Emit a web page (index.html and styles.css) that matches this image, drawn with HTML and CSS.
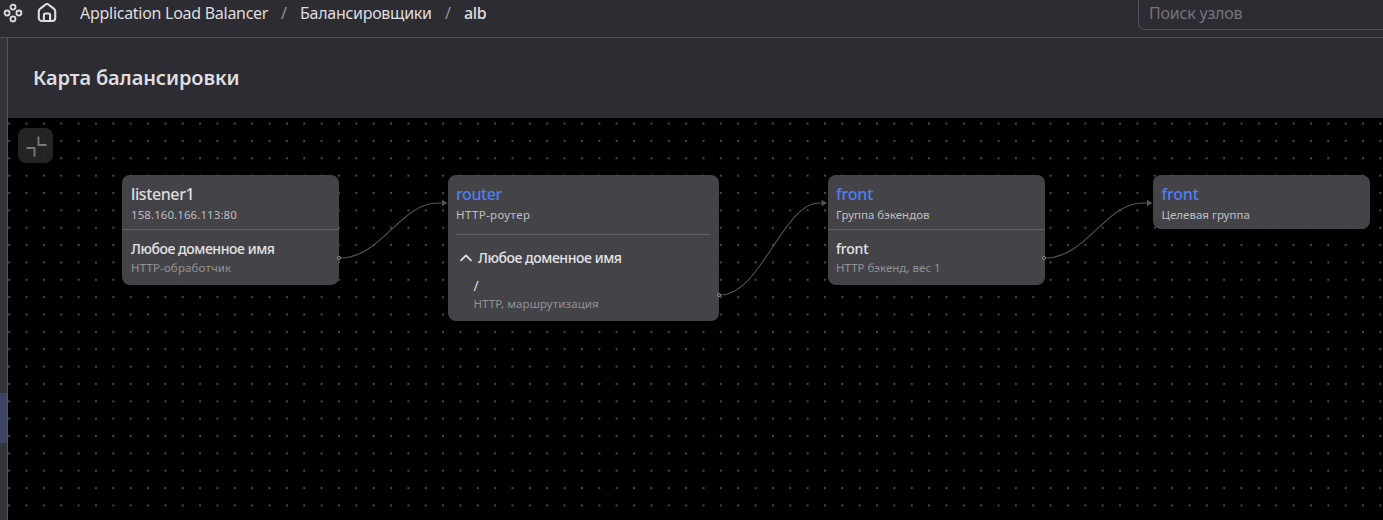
FILE: index.html
```html
<!DOCTYPE html>
<html lang="ru">
<head>
<meta charset="utf-8">
<title>Карта балансировки</title>
<link rel="stylesheet" href="styles.css">
</head>
<body>
<header class="topbar">
  <svg class="icon-services" width="20" height="20" viewBox="0 0 20 20"><g fill="none" stroke="#dedddf" stroke-width="1.8"><circle cx="10" cy="4.1" r="2.5"/><circle cx="4.1" cy="10" r="2.5"/><circle cx="15.9" cy="10" r="2.5"/><circle cx="10" cy="15.9" r="2.5"/></g></svg>
  <svg class="icon-home" width="20" height="20" viewBox="0 0 20 20"><g fill="none" stroke="#dedddf" stroke-width="2.1" stroke-linejoin="round"><path d="M1.8 8.3a3 3 0 0 1 1.2-2.5L8.6 1.5a2.4 2.4 0 0 1 2.8 0L17 5.8a3 3 0 0 1 1.2 2.5V15a3 3 0 0 1-3 3H4.8a3 3 0 0 1-3-3z"/><path d="M6.9 18v-6a1.5 1.5 0 0 1 1.5-1.5h3.2a1.5 1.5 0 0 1 1.5 1.5v6"/></g></svg>
  <nav class="crumbs">
    <span class="crumb crumb-service">Application Load Balancer</span><span class="sep">/</span><span class="crumb crumb-list">Балансировщики</span><span class="sep">/</span><span class="crumb crumb-current">alb</span>
  </nav>
  <div class="search">Поиск узлов</div>
</header>
<div class="layout">
  <aside class="rail"><div class="rail-active"></div></aside>
  <main class="main">
    <div class="heading"><h1>Карта балансировки</h1></div>
    <section class="canvas">
      <svg class="wires" width="1375" height="402" viewBox="8 118 1375 402">
        <defs><pattern id="dots" x="0.5" y="114.9" width="17.357" height="17.357" patternUnits="userSpaceOnUse"><circle cx="8.68" cy="8.68" r="1.15" fill="#47474a"/></pattern></defs>
        <rect x="8" y="118" width="1375" height="402" fill="url(#dots)"/>
      </svg>
      <button class="fit"><svg width="22" height="22" viewBox="0 0 22 22"><path d="M13.5 1.5v8.5h8M1.5 13h8v8.5" fill="none" stroke="#78787a" stroke-width="1.9"/></svg></button>
      <article class="node node-listener">
        <div class="head"><div class="title">listener1</div><div class="sub sub-ip">158.160.166.113:80</div></div>
        <div class="row"><div class="name name-host">Любое доменное имя</div><div class="note note-handler">HTTP-обработчик</div></div>
      </article>
      <article class="node node-router">
        <div class="head head-inset"><div class="title link">router</div><div class="sub sub-router">HTTP-роутер</div></div>
        <div class="group">
          <div class="group-head"><svg width="12" height="8" viewBox="0 0 12 8"><path d="M1 6.4 6 1.3l5 5.1" fill="none" stroke="#e3e3e4" stroke-width="1.7" stroke-linecap="round" stroke-linejoin="round"/></svg><span class="name name-host">Любое доменное имя</span></div>
          <div class="route"><div class="path">/</div><div class="note note-route">HTTP, маршрутизация</div></div>
        </div>
      </article>
      <article class="node node-backend">
        <div class="head"><div class="title link title-front">front</div><div class="sub sub-backend">Группа бэкендов</div></div>
        <div class="row"><div class="name name-front">front</div><div class="note note-backend">HTTP бэкенд, вес 1</div></div>
      </article>
      <article class="node node-target">
        <div class="head head-last"><div class="title link title-front">front</div><div class="sub sub-target">Целевая группа</div></div>
      </article>
      <svg class="wires" width="1375" height="402" viewBox="8 118 1375 402">
        <g fill="none" stroke="#535355" stroke-width="1.1">
          <path d="M340 258C382 258 400 203 438 203h5"/>
          <path d="M720 295C761 295 783 203 819 203h4"/>
          <path d="M1045 258C1087 258 1105 203 1143 203h5"/>
        </g>
        <g fill="#535355"><path d="M442 199.7 447.5 203 442 206.3zM821.5 199.7 827 203 821.5 206.3zM1147 199.7 1152.5 203 1147 206.3z"/></g>
        <g fill="#302f33" stroke="#858588" stroke-width="1"><circle cx="339" cy="258" r="1.6"/><circle cx="719" cy="295" r="1.6"/><circle cx="1044" cy="258" r="1.6"/></g>
      </svg>
    </section>
  </main>
</div>
</body>
</html>
```
FILE: styles.css
```css
* { box-sizing: border-box; }
body { margin: 0; width: 1383px; height: 520px; overflow: hidden; background: #2d2c33; color: #dedddf; font-family: "Noto Sans", "Open Sans", sans-serif; }
.topbar { display: flex; height: 38px; border-bottom: 1px solid #504f55; padding-left: 3px; overflow: hidden; }
.topbar svg { flex: none; margin-top: 3px; }
.icon-home { margin-left: 14px; }
.crumbs { display: flex; margin-left: 23px; font-size: 16px; line-height: 26px; white-space: nowrap; }
.crumb { letter-spacing: -.28px; }
.crumb-service { width: 188px; }
.crumb-list { width: 132px; }
.crumb-current { font-weight: 500; letter-spacing: -.4px; }
.sep { width: 32px; text-align: center; color: #929196; }
.search { margin-left: auto; width: 245px; height: 30px; flex: none; border: 1px solid #504f55; border-top: 0; border-right: 0; border-radius: 0 0 0 7px; padding-left: 10px; font-size: 16px; line-height: 26px; letter-spacing: -.2px; color: #75747a; }
.layout { display: flex; height: 482px; }
.rail { width: 8px; flex: none; background: #35343a; border-right: 1px solid #59585e; padding-top: 355px; }
.rail-active { height: 50px; background: #3b4366; }
.main { flex: 1; }
.heading { height: 80px; padding: 24px 25px 0; }
h1 { margin: 0; font-size: 20px; line-height: 32px; font-weight: 600; letter-spacing: -.12px; white-space: nowrap; }
.canvas { position: relative; height: 402px; background: #000; overflow: hidden; }
.wires { position: absolute; left: 0; top: 0; pointer-events: none; }
.fit { position: absolute; left: 10px; top: 10px; width: 35px; height: 35px; border: 0; border-radius: 8px; background: rgba(42,42,43,.85); padding: 0; display: grid; place-items: center; }
.node { position: absolute; top: 57px; width: 217px; background: #444348; border-radius: 8px; white-space: nowrap; }
.node-listener { left: 114px; height: 110px; }
.node-router { left: 440px; width: 271px; height: 146px; }
.node-backend { left: 820px; height: 110px; }
.node-target { left: 1145px; height: 54px; }
.head { height: 55px; padding: 8px 8px 0 9px; border-bottom: 1px solid #626166; }
.head-inset { height: 60px; margin: 0 9px 0 8px; padding: 8px 0 0; }
.node-backend .head, .node-backend .row { padding-left: 8px; }
.node-target .head { height: 54px; border: 0; padding-left: 8.5px; }
.title { font-size: 16px; line-height: 23px; font-weight: 500; letter-spacing: -.4px; }
.title-front { letter-spacing: -.2px; }
.link { color: #4c7ff2; }
.sub { font-size: 11.5px; line-height: 18px; color: #bfbfc1; }
.sub-ip { letter-spacing: .08px; }
.sub-router { letter-spacing: .38px; }
.row { padding: 8px 8px 0 9px; }
.name { font-size: 14px; line-height: 22px; font-weight: 500; color: #e3e3e4; }
.name-host { letter-spacing: -.43px; }
.name-front { letter-spacing: -.2px; }
.note { font-size: 11.5px; line-height: 16px; color: #929195; }
.note-handler { letter-spacing: .14px; }
.note-route { letter-spacing: .1px; }
.group { padding: 12px 0 0 12px; }
.group-head { display: flex; align-items: center; gap: 6px; }
.route { padding: 7px 0 0 13.5px; }
.path { font-size: 14px; line-height: 20px; }
```
